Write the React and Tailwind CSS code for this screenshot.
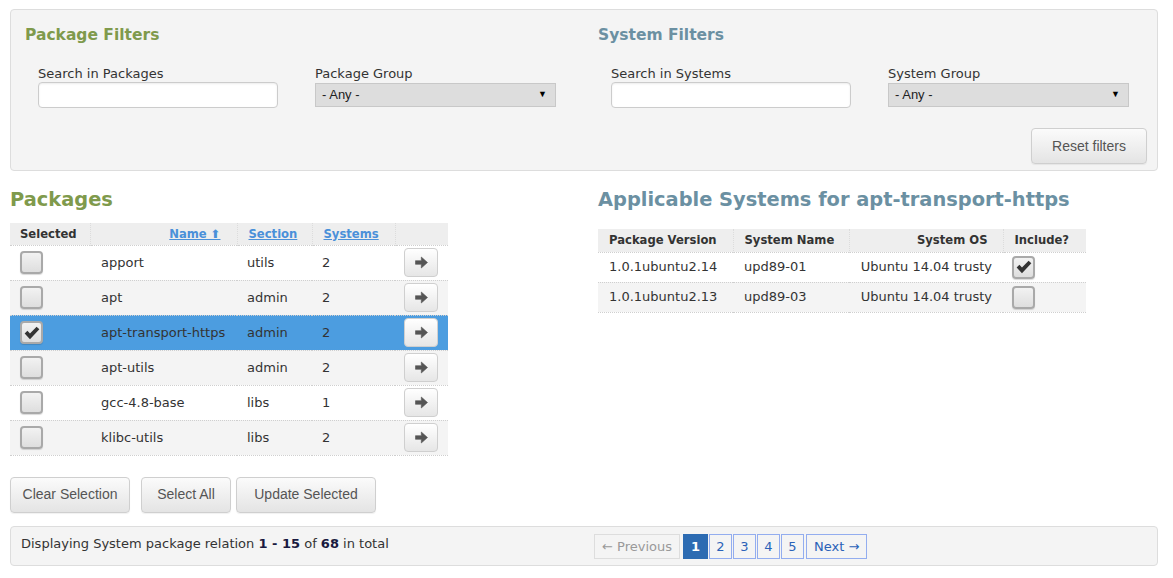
import React from 'react'

const packages = [
  { name: 'apport', section: 'utils', systems: 2 },
  { name: 'apt', section: 'admin', systems: 2 },
  { name: 'apt-transport-https', section: 'admin', systems: 2, selected: true },
  { name: 'apt-utils', section: 'admin', systems: 2 },
  { name: 'gcc-4.8-base', section: 'libs', systems: 1 },
  { name: 'klibc-utils', section: 'libs', systems: 2 },
]

const systems = [
  { version: '1.0.1ubuntu2.14', name: 'upd89-01', os: 'Ubuntu 14.04 trusty', include: true },
  { version: '1.0.1ubuntu2.13', name: 'upd89-03', os: 'Ubuntu 14.04 trusty', include: false },
]

function Checkbox({ checked }) {
  return (
    <div className="w-[23px] h-[23px] rounded-[4px] border-2 border-[#a9a9a9] bg-gradient-to-b from-[#f2f2f2] to-[#dedede] shadow-[0_1px_1px_rgba(0,0,0,0.15)] flex items-center justify-center">
      {checked && (
        <svg width="16" height="14" viewBox="0 0 15 13">
          <path d="M0.6 7 L3.2 4.5 L5.6 7 L11.8 0.6 L14.4 3.1 L5.6 12.4 Z" fill="#333" />
        </svg>
      )}
    </div>
  )
}

function ArrowButton() {
  return (
    <button className="w-[34px] h-[29px] rounded-[4px] border border-[#cfcfcf] bg-gradient-to-b from-white to-[#e6e6e6] flex items-center justify-center">
      <svg width="13" height="13" viewBox="0 0 13 13">
        <path d="M0.5 4.7 H6.3 V1 L12.5 6.5 L6.3 12 V8.3 H0.5 Z" fill="#555" stroke="#555" strokeWidth="0.6" strokeLinejoin="round" />
      </svg>
    </button>
  )
}

function Btn({ children, className = '' }) {
  return (
    <button
      className={
        "h-[36px] rounded-[4px] border border-[#cfcfcf] bg-gradient-to-b from-[#fbfbfb] to-[#e4e4e4] font-['Liberation_Sans',Arial,sans-serif] text-[14px] text-[#555] shadow-[0_1px_1px_rgba(0,0,0,0.06)] " +
        className
      }
    >
      {children}
    </button>
  )
}

function Field({ label, children }) {
  return (
    <div className="w-[240px] flex flex-col">
      <label className="text-[13px] leading-[16px] text-[#333] mt-[1px]">{label}</label>
      {children}
    </div>
  )
}

function TextInput() {
  return (
    <input
      type="text"
      className="w-[240px] h-[26px] rounded-[4px] border border-[#cccccc] bg-white shadow-[inset_0_1px_2px_rgba(0,0,0,0.08)] outline-none"
    />
  )
}

function Select() {
  return (
    <div className="mt-[1px] w-[241px] h-[24px] border border-[#c8c8c8] bg-[#dddddd] flex items-center justify-between pl-[6px] pr-[8px] font-['Liberation_Sans',Arial,sans-serif] text-[13px] text-[#222]">
      <span>- Any -</span>
      <span className="text-[9px] text-black">▼</span>
    </div>
  )
}

export default function App() {
  return (
    <div className="min-h-screen bg-white pl-[10px] pr-[15px] pt-[9px] font-['DejaVu_Sans',Verdana,sans-serif] text-[#333]">
      {/* filters */}
      <div className="h-[162px] rounded-[4px] border border-[#dddddd] bg-[#f4f4f4] flex">
        <div className="w-[573px] pl-[14px] pt-[15px]">
          <h2 className="text-[15.5px] leading-[20px] font-bold text-[#7f9a4c]">Package Filters</h2>
          <div className="flex gap-[37px] pl-[13px] mt-[20px]">
            <Field label="Search in Packages">
              <TextInput />
            </Field>
            <Field label="Package Group">
              <Select />
            </Field>
          </div>
        </div>
        <div className="flex-1 pl-[14px] pt-[15px] pr-[10px]">
          <h2 className="text-[15.5px] leading-[20px] font-bold text-[#6b90a2]">System Filters</h2>
          <div className="flex gap-[37px] pl-[13px] mt-[20px]">
            <Field label="Search in Systems">
              <TextInput />
            </Field>
            <Field label="System Group">
              <Select />
            </Field>
          </div>
          <div className="flex justify-end mt-[20px]">
            <Btn className="w-[116px]">Reset filters</Btn>
          </div>
        </div>
      </div>

      {/* tables */}
      <div className="flex mt-[17px]">
        <div className="w-[574px]">
          <h2 className="text-[19.4px] leading-[24px] font-bold text-[#7f9a4c]">Packages</h2>
          <table className="mt-[11px] w-[438px] border-collapse table-fixed text-[13px]">
            <colgroup>
              <col className="w-[80px]" />
              <col className="w-[147px]" />
              <col className="w-[75px]" />
              <col className="w-[83px]" />
              <col className="w-[53px]" />
            </colgroup>
            <thead>
              <tr className="h-[22px] bg-[#eeeeee] text-[11.6px] font-bold border-b border-dotted border-[#cfcfcf]">
                <th className="text-left pl-[10px] pt-[1px] border-r border-dotted border-[#dcdcdc]">Selected</th>
                <th className="text-right pr-[16px] pt-[1px] border-r border-dotted border-[#dcdcdc]">
                  <span className="text-[#4a90d9] underline">Name ⬆</span>
                </th>
                <th className="text-left pl-[11px] pt-[1px] border-r border-dotted border-[#dcdcdc]">
                  <span className="text-[#4a90d9] underline">Section</span>
                </th>
                <th className="text-left pl-[11px] pt-[1px] border-r border-dotted border-[#dcdcdc]">
                  <span className="text-[#4a90d9] underline">Systems</span>
                </th>
                <th></th>
              </tr>
            </thead>
            <tbody>
              {packages.map((p, i) => (
                <tr
                  key={p.name}
                  className={
                    'h-[35px] border-b border-dotted border-[#cfcfcf] ' +
                    (p.selected ? 'bg-[#4c9de0]' : i % 2 ? 'bg-[#f4f4f4]' : 'bg-white')
                  }
                >
                  <td className="pl-[10px]">
                    <Checkbox checked={p.selected} />
                  </td>
                  <td className="pl-[11px]">{p.name}</td>
                  <td className="pl-[10px]">{p.section}</td>
                  <td className="pl-[10px]">{p.systems}</td>
                  <td className="pl-[9px]">
                    <ArrowButton />
                  </td>
                </tr>
              ))}
            </tbody>
          </table>
          <div className="flex mt-[21px]">
            <Btn className="w-[120px]">Clear Selection</Btn>
            <Btn className="w-[90px] ml-[11px]">Select All</Btn>
            <Btn className="w-[140px] ml-[5px] from-[#f4f4f4] to-[#e0e0e0]">Update Selected</Btn>
          </div>
        </div>
        <div className="flex-1 pl-[14px]">
          <h2 className="text-[19.4px] leading-[24px] font-bold text-[#6b90a2]">
            Applicable Systems for apt-transport-https
          </h2>
          <table className="mt-[17px] w-[488px] border-collapse table-fixed text-[13px]">
            <colgroup>
              <col className="w-[135px]" />
              <col className="w-[116px]" />
              <col className="w-[154px]" />
              <col className="w-[83px]" />
            </colgroup>
            <thead>
              <tr className="h-[23px] bg-[#eeeeee] text-[11.6px] font-bold border-b border-dotted border-[#cfcfcf]">
                <th className="text-left pl-[11px] border-r border-dotted border-[#dcdcdc]">Package Version</th>
                <th className="text-left pl-[11px] border-r border-dotted border-[#dcdcdc]">System Name</th>
                <th className="text-right pr-[15px] border-r border-dotted border-[#dcdcdc]">System OS</th>
                <th className="text-left pl-[11px]">Include?</th>
              </tr>
            </thead>
            <tbody>
              {systems.map((s, i) => (
                <tr
                  key={s.version}
                  className={'h-[30px] border-b border-dotted border-[#cfcfcf] ' + (i % 2 ? 'bg-[#f4f4f4]' : 'bg-white')}
                >
                  <td className="pl-[11px]">{s.version}</td>
                  <td className="pl-[11px]">{s.name}</td>
                  <td className="text-right pr-[11px]">{s.os}</td>
                  <td className="pl-[9px]">
                    <Checkbox checked={s.include} />
                  </td>
                </tr>
              ))}
            </tbody>
          </table>
        </div>
      </div>

      {/* footer */}
      <div className="mt-[13px] h-[40px] rounded-[4px] border border-[#dddddd] bg-[#f4f4f4] flex items-start pt-[7px]">
        <div className="w-[573px] pl-[10px] text-[13px] leading-[18px] mt-[1px]">
          Displaying System package relation <b className="text-[#1a1a40]">1 - 15</b> of{' '}
          <b className="text-[#1a1a40]">68</b> in total
        </div>
        <div className="flex gap-[1px] pl-[10px] text-[13px]">
          <span className="h-[25px] px-[7px] pt-[2px] flex items-center border border-[#dddddd] text-[#999]">← Previous</span>
          <span className="h-[25px] w-[25px] ml-[2px] pt-[2px] flex items-center justify-center bg-[#2c6bb2] text-white font-bold">1</span>
          {['2', '3', '4', '5'].map((n) => (
            <span
              key={n}
              className="h-[25px] w-[23px] pt-[2px] flex items-center justify-center border border-[#93adef] text-[#2a62b8]"
            >
              {n}
            </span>
          ))}
          <span className="h-[25px] px-[7px] ml-[1px] pt-[2px] flex items-center border border-[#93adef] text-[#2a62b8]">Next →</span>
        </div>
      </div>
    </div>
  )
}
